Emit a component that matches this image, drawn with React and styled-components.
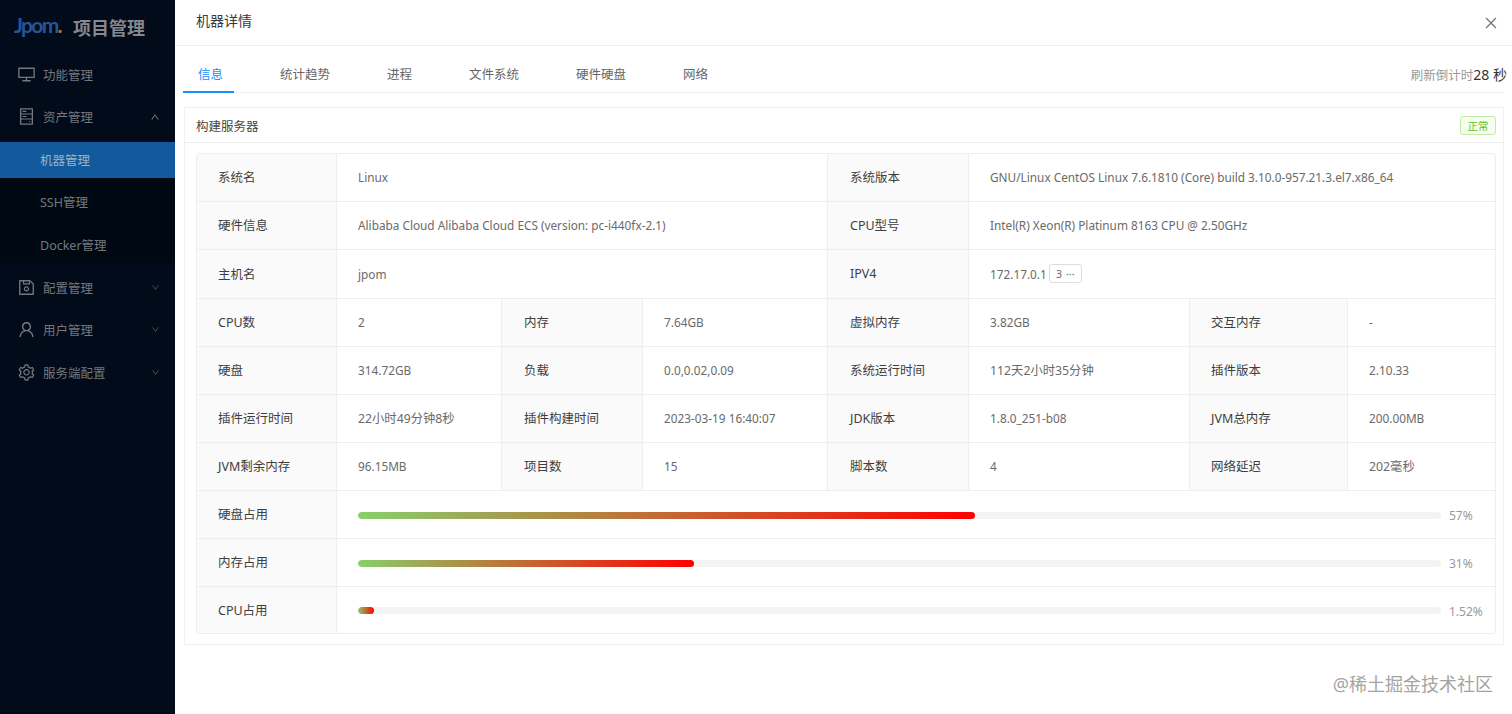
import React from 'react';
import styled, { createGlobalStyle } from 'styled-components';
import {
  AiOutlineDesktop, AiOutlineHdd, AiOutlineSave, AiOutlineUser, AiOutlineSetting,
  AiOutlineUp, AiOutlineDown, AiOutlineClose,
} from 'react-icons/ai';

const Global = createGlobalStyle`
  html, body { margin: 0; padding: 0; height: 100%; background: #fff; overflow: hidden; }
  body { font-family: "Noto Sans", "Noto Sans CJK SC", sans-serif; font-size: 12.5px; }
  * { box-sizing: border-box; }
`;

const Page = styled.div`
  display: flex;
  width: 1512px;
  height: 714px;
  position: relative;
`;

const Sidebar = styled.aside`
  width: 175px;
  flex: none;
  background: #010b19;
  color: #74787d;
`;

const Brand = styled.div`
  height: 56.6px;
  padding: 12px 0 0 14px;
  display: flex;
  align-items: flex-start;
`;

const LogoWord = styled.span`
  font-family: "Lato", sans-serif;
  font-size: 21px;
  font-weight: 700;
  line-height: 26px;
  letter-spacing: -1.7px;
  color: #265596;
  width: 48px;
  white-space: nowrap;
`;

const LogoDot = styled.span`
  color: #c9662c;
`;

const BrandName = styled.span`
  margin-left: 11px;
  margin-top: 2px;
  font-family: "Noto Sans CJK SC", sans-serif;
  font-size: 18px;
  line-height: 26px;
  font-weight: 700;
  color: #85888c;
`;

const MenuList = styled.nav`
  display: flex;
  flex-direction: column;
  gap: 6.6px;
`;

const SubList = styled.div`
  display: flex;
  flex-direction: column;
  gap: 6.6px;
  background: #000812;
`;

const MenuItem = styled.div`
  height: 36px;
  display: flex;
  align-items: center;
  padding: 0 15px 1px 17px;
  font-size: 12.5px;
  svg.lead { font-size: 19px; margin-right: 7px; flex: none; }
`;

const Arrow = styled.span`
  margin-left: auto;
  display: flex;
  font-size: ${p => (p.$open ? 10 : 9)}px;
  color: ${p => (p.$open ? '#9a9da0' : '#50555b')};
`;

const SubItem = styled.div`
  height: 36px;
  display: flex;
  align-items: center;
  padding: 0 0 1px 40px;
  background: ${p => (p.$active ? '#125a9c' : 'transparent')};
  color: ${p => (p.$active ? '#9fb2c6' : '#74787d')};
`;

const Main = styled.main`
  flex: 1;
  min-width: 0;
  display: flex;
  flex-direction: column;
`;

const Header = styled.header`
  height: 46px;
  flex: none;
  border-bottom: 1px solid #eeeeee;
  display: flex;
  align-items: center;
  justify-content: space-between;
  padding: 0 13px 5px 21px;
  font-size: 14px;
  color: #3a3a3a;
  svg { font-size: 16px; color: #777; margin-top: 6px; }
`;

const Content = styled.div`
  padding: 0 8px 0 9px;
`;

const TabBar = styled.div`
  height: 47px;
  border-bottom: 1px solid #f0f0f0;
  display: flex;
  align-items: stretch;
  gap: 32px;
  position: relative;
`;

const Tab = styled.div`
  padding: 9px 11px 0 15px;
  margin: 0 0 -1px -1px;
  display: flex;
  align-items: center;
  color: ${p => (p.$active ? '#1890ff' : '#666')};
  border-bottom: 2px solid ${p => (p.$active ? '#1890ff' : 'transparent')};
`;

const Countdown = styled.div`
  margin-left: auto;
  padding-top: 9px;
  margin-right: -3px;
  align-self: center;
  color: #999;
  font-size: 12.5px;
  span { color: #333; font-size: 14px; }
`;

const Card = styled.section`
  margin-top: 14px;
  border: 1px solid #f0f0f0;
  height: 538px;
`;

const CardHead = styled.div`
  height: 35px;
  display: flex;
  align-items: center;
  justify-content: space-between;
  border-bottom: 1px solid #eeeeee;
  padding: 0 7px 0 11px;
  color: #444;
`;

const StatusTag = styled.span`
  width: 36px;
  height: 19px;
  display: flex;
  align-items: center;
  justify-content: center;
  background: #f6ffed;
  border: 1px solid #c6e8a8;
  border-radius: 3px;
  color: #62c12f;
  font-size: 10.5px;
`;

const CardBody = styled.div`
  padding: 10px 7px 0 11px;
`;

const TableWrap = styled.div`
  border: 1px solid #eeeeee;
  border-radius: 4px;
  overflow: hidden;
  height: 481px;
`;

const Table = styled.table`
  width: 100%;
  height: 100%;
  table-layout: fixed;
  border-collapse: separate;
  border-spacing: 0;
`;

const Row = styled.tr`
  height: ${p => p.$h || 48}px;
  &:last-child > * { border-bottom: 0; padding-bottom: 3px; }
`;

const Label = styled.th`
  background: #fafafa;
  border-bottom: 1px solid #eeeeee;
  border-right: 1px solid #eeeeee;
  padding: 0 0 2px 22px;
  text-align: left;
  font-weight: 400;
  color: #3e3e3e;
  white-space: nowrap;
  &:first-child, &:nth-child(7) { padding-left: 21px; }
`;

const Value = styled.td`
  border-bottom: 1px solid #eeeeee;
  border-right: 1px solid #eeeeee;
  padding: 0 0 1px 21px;
  color: #6a6a6a;
  font-size: ${p => (p.$cjk ? 12.3 : 11.8)}px;
  white-space: nowrap;
  &:last-child { border-right: 0; }
`;

const MoreButton = styled.span`
  display: inline-flex;
  align-items: center;
  justify-content: center;
  gap: 4px;
  width: 33px;
  height: 19px;
  margin-left: 2px;
  vertical-align: 1px;
  border: 1px solid #dddddd;
  border-radius: 3px;
  font-size: 10.5px;
  color: #666;
`;

const ProgressLine = styled.div`
  display: flex;
  align-items: center;
  padding-right: 13px;
`;

const Track = styled.div`
  flex: 1;
  height: 7px;
  margin-top: 2px;
  border-radius: 4px;
  background: #f3f3f3;
  overflow: hidden;
`;

const Fill = styled.div`
  height: 100%;
  border-radius: 4px;
  background: linear-gradient(to right, #87d068, #ff0000);
`;

const Percent = styled.span`
  width: 33px;
  margin-left: 8px;
  margin-top: 3px;
  color: #999;
  font-size: 12px;
`;

const Watermark = styled.div`
  position: absolute;
  right: 19px;
  top: 672px;
  font-size: 18px;
  line-height: 24px;
  color: #a4a4a4;
`;

const grid = [
  ['CPU数', '2', '内存', '7.64GB', '虚拟内存', '3.82GB', '交互内存', '-'],
  ['硬盘', '314.72GB', '负载', '0.0,0.02,0.09', '系统运行时间', '112天2小时35分钟', '插件版本', '2.10.33'],
  ['插件运行时间', '22小时49分钟8秒', '插件构建时间', '2023-03-19 16:40:07', 'JDK版本', '1.8.0_251-b08', 'JVM总内存', '200.00MB'],
  ['JVM剩余内存', '96.15MB', '项目数', '15', '脚本数', '4', '网络延迟', '202毫秒'],
];

const bars = [
  ['硬盘占用', 57, '57%'],
  ['内存占用', 31, '31%'],
  ['CPU占用', 1.52, '1.52%'],
];

const tabs = ['信息', '统计趋势', '进程', '文件系统', '硬件硬盘', '网络'];

const hasCjk = text => /[\u4e00-\u9fff]/.test(text);

export default function App() {
  return (
    <Page>
      <Global />
      <Sidebar>
        <Brand>
          <LogoWord>Jpom<LogoDot>.</LogoDot></LogoWord>
          <BrandName>项目管理</BrandName>
        </Brand>
        <MenuList>
          <MenuItem><AiOutlineDesktop className="lead" />功能管理</MenuItem>
          <MenuItem><AiOutlineHdd className="lead" />资产管理<Arrow $open><AiOutlineUp /></Arrow></MenuItem>
          <SubList>
            <SubItem $active>机器管理</SubItem>
            <SubItem>SSH管理</SubItem>
            <SubItem>Docker管理</SubItem>
          </SubList>
          <MenuItem><AiOutlineSave className="lead" />配置管理<Arrow><AiOutlineDown /></Arrow></MenuItem>
          <MenuItem><AiOutlineUser className="lead" />用户管理<Arrow><AiOutlineDown /></Arrow></MenuItem>
          <MenuItem><AiOutlineSetting className="lead" />服务端配置<Arrow><AiOutlineDown /></Arrow></MenuItem>
        </MenuList>
      </Sidebar>
      <Main>
        <Header>
          <span>机器详情</span>
          <AiOutlineClose />
        </Header>
        <Content>
          <TabBar>
            {tabs.map((t, i) => <Tab key={t} $active={i === 0}>{t}</Tab>)}
            <Countdown>刷新倒计时<span>28 秒</span></Countdown>
          </TabBar>
          <Card>
            <CardHead>
              <span>构建服务器</span>
              <StatusTag>正常</StatusTag>
            </CardHead>
            <CardBody>
              <TableWrap>
                <Table>
                  <colgroup>
                    <col width="140" /><col width="165" /><col width="141" /><col width="185" />
                    <col width="141" /><col width="221" /><col width="158" /><col />
                  </colgroup>
                  <tbody>
                    <Row>
                      <Label>系统名</Label>
                      <Value colSpan={3}>Linux</Value>
                      <Label>系统版本</Label>
                      <Value colSpan={3}>GNU/Linux CentOS Linux 7.6.1810 (Core) build 3.10.0-957.21.3.el7.x86_64</Value>
                    </Row>
                    <Row>
                      <Label>硬件信息</Label>
                      <Value colSpan={3}>Alibaba Cloud Alibaba Cloud ECS (version: pc-i440fx-2.1)</Value>
                      <Label>CPU型号</Label>
                      <Value colSpan={3}>Intel(R) Xeon(R) Platinum 8163 CPU @ 2.50GHz</Value>
                    </Row>
                    <Row $h={49}>
                      <Label>主机名</Label>
                      <Value colSpan={3}>jpom</Value>
                      <Label>IPV4</Label>
                      <Value colSpan={3}>172.17.0.1<MoreButton>3<span>···</span></MoreButton></Value>
                    </Row>
                    {grid.map(r => (
                      <Row key={r[0]}>
                        {r.map((c, i) => (i % 2 === 0
                          ? <Label key={i}>{c}</Label>
                          : <Value key={i} $cjk={hasCjk(c)}>{c}</Value>))}
                      </Row>
                    ))}
                    {bars.map(([name, pct, text]) => (
                      <Row key={name}>
                        <Label>{name}</Label>
                        <Value colSpan={7}>
                          <ProgressLine>
                            <Track><Fill style={{ width: `${pct}%` }} /></Track>
                            <Percent>{text}</Percent>
                          </ProgressLine>
                        </Value>
                      </Row>
                    ))}
                  </tbody>
                </Table>
              </TableWrap>
            </CardBody>
          </Card>
        </Content>
      </Main>
      <Watermark>@稀土掘金技术社区</Watermark>
    </Page>
  );
}
